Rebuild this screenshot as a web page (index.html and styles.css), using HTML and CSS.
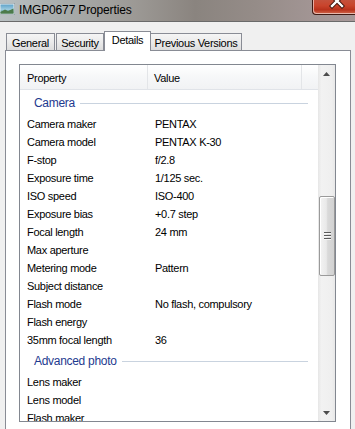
FILE: index.html
```html
<!DOCTYPE html>
<html>
<head>
<meta charset="utf-8">
<link rel="stylesheet" href="styles.css">
</head>
<body>
<div class="window">
  <div class="titlebar">
    <svg class="app-icon" width="16" height="12" viewBox="0 0 16 12">
      <defs>
        <linearGradient id="sky" x1="0" y1="0" x2="0" y2="1">
          <stop offset="0" stop-color="#5fa3c9"/>
          <stop offset="0.55" stop-color="#9ccbe0"/>
          <stop offset="1" stop-color="#3f7f5a"/>
        </linearGradient>
      </defs>
      <rect x="0" y="0" width="16" height="12" fill="#e8eef0" stroke="#7b8890" stroke-width="1"/>
      <rect x="1.5" y="1.5" width="13" height="9" fill="url(#sky)"/>
      <path d="M1.5 9 L6 6.5 L9 8 L14.5 5.5 L14.5 10.5 L1.5 10.5 Z" fill="#4c7a4a"/>
    </svg>
    <span class="title">IMGP0677 Properties</span>
    <div class="close-btn">
      <svg width="16" height="10" viewBox="0 0 16 10">
        <path d="M3 -4 L13 6 M13 -4 L3 6" stroke="#3a1008" stroke-width="4.2" stroke-linecap="square"/>
        <path d="M3 -4 L13 6 M13 -4 L3 6" stroke="#ffffff" stroke-width="2.4" stroke-linecap="square"/>
      </svg>
    </div>
  </div>

  <div class="tabs">
    <div class="tab tab-general">General</div>
    <div class="tab tab-security">Security</div>
    <div class="tab tab-details active">Details</div>
    <div class="tab tab-previous">Previous Versions</div>
  </div>

  <div class="panel">
    <div class="list">
      <div class="list-main">
        <div class="header">
          <div class="hcell hcell-prop">Property</div>
          <div class="hcell hcell-value">Value</div>
          <div class="hcell hcell-extra"></div>
        </div>
        <div class="group group-first"><span>Camera</span><i class="rule"></i></div>
        <div class="row"><span class="p">Camera maker</span><span class="v">PENTAX</span></div>
        <div class="row"><span class="p">Camera model</span><span class="v">PENTAX K-30</span></div>
        <div class="row"><span class="p">F-stop</span><span class="v">f/2.8</span></div>
        <div class="row"><span class="p">Exposure time</span><span class="v">1/125 sec.</span></div>
        <div class="row"><span class="p">ISO speed</span><span class="v">ISO-400</span></div>
        <div class="row"><span class="p">Exposure bias</span><span class="v">+0.7 step</span></div>
        <div class="row"><span class="p">Focal length</span><span class="v">24 mm</span></div>
        <div class="row"><span class="p">Max aperture</span><span class="v"></span></div>
        <div class="row"><span class="p">Metering mode</span><span class="v">Pattern</span></div>
        <div class="row"><span class="p">Subject distance</span><span class="v"></span></div>
        <div class="row"><span class="p">Flash mode</span><span class="v">No flash, compulsory</span></div>
        <div class="row"><span class="p">Flash energy</span><span class="v"></span></div>
        <div class="row"><span class="p">35mm focal length</span><span class="v">36</span></div>
        <div class="group"><span>Advanced photo</span><i class="rule"></i></div>
        <div class="row"><span class="p">Lens maker</span><span class="v"></span></div>
        <div class="row"><span class="p">Lens model</span><span class="v"></span></div>
        <div class="row"><span class="p">Flash maker</span><span class="v"></span></div>
      </div>
      <div class="scrollbar">
        <div class="sb-btn">
          <svg width="7" height="4" viewBox="0 0 7 4"><path d="M0 4 L3.5 0 L7 4 Z" fill="#4d4d4d"/></svg>
        </div>
        <div class="sb-track">
          <div class="sb-thumb">
            <div class="grip"></div><div class="grip"></div><div class="grip"></div>
          </div>
        </div>
        <div class="sb-btn">
          <svg width="7" height="4" viewBox="0 0 7 4"><path d="M0 0 L7 0 L3.5 4 Z" fill="#4d4d4d"/></svg>
        </div>
      </div>
    </div>
  </div>
</div>
</body>
</html>
```

FILE: styles.css
```css
html, body {
  margin: 0;
  padding: 0;
}
body {
  width: 355px;
  height: 429px;
  overflow: hidden;
  background: #f0f0f0;
  font-family: "Liberation Sans", Arial, sans-serif;
  font-size: 11px;
  letter-spacing: -0.3px;
  color: #000;
}
.window {
  width: 355px;
  height: 429px;
  overflow: hidden;
}
.titlebar {
  height: 21px;
  border-bottom: 1px solid #6a6a6a;
  display: flex;
  align-items: flex-start;
  background: linear-gradient(90deg, #b9c0c2 0%, #a8acab 18%, #9c9995 38%, #8a847f 55%, #958c88 72%, #a29594 88%, #a7999a 100%);
}
.app-icon {
  margin-top: 3px;
  margin-left: -1px;
  flex: none;
}
.title {
  margin-left: 4px;
  margin-top: 3px;
  font-size: 12px;
  letter-spacing: -0.15px;
  line-height: 14px;
  color: #000;
}
.close-btn {
  margin-left: auto;
  width: 42px;
  height: 14px;
  border: 1px solid #3f1a14;
  border-top: none;
  border-right: none;
  border-bottom-left-radius: 4px;
  background: linear-gradient(180deg, #c4513c 0%, #c9442c 40%, #b8321c 70%, #d06a4e 100%);
  box-shadow: inset 1px -1px 0 rgba(255,255,255,0.55);
  display: flex;
  justify-content: center;
  align-items: flex-start;
  flex: none;
}
.close-btn svg {
  margin-top: 0;
  margin-left: 6px;
}

.tabs {
  display: flex;
  align-items: flex-end;
  margin-top: 9px;
  padding-left: 6px;
  height: 19px;
  position: relative;
  z-index: 1;
}
.tab {
  height: 16px;
  border: 1px solid #898c95;
  border-bottom: none;
  background: linear-gradient(180deg, #f5f5f5 0%, #ebebeb 50%, #dddddd 100%);
  text-align: center;
  line-height: 18px;
  box-sizing: content-box;
  white-space: nowrap;
}
.tab-general { width: 47px; margin-right: 1px; }
.tab-security { width: 46px; }
.tab-details { width: 45px; margin-left: 0; }
.tab-previous { width: 90px; border-left: none; margin-left: 0; }
.tab.active {
  height: 19px;
  background: #ffffff;
  line-height: 16px;
  margin-bottom: -1px;
  border-color: #898c95;
}

.panel {
  margin: 0 4px 0 5px;
  border: 1px solid #898c95;
  background: #ffffff;
  padding: 13px 14px 0 13px;
  height: 400px;
}
.list {
  border: 1px solid #828790;
  height: 356px;
  display: flex;
  overflow: hidden;
}
.list-main {
  flex: 1;
  min-width: 0;
  overflow: hidden;
}
.header {
  display: flex;
  height: 24px;
  border-bottom: 1px solid #e0e3e8;
  background: linear-gradient(180deg, #ffffff 0%, #f7f8f9 45%, #f1f2f4 100%);
}
.hcell {
  line-height: 26px;
  box-sizing: border-box;
}
.hcell-prop {
  width: 128px;
  padding-left: 7px;
  border-right: 1px solid #e3e5e8;
}
.hcell-value {
  width: 154px;
  padding-left: 6px;
  border-right: 1px solid #e3e5e8;
}
.hcell-extra {
  flex: 1;
}
.group {
  display: flex;
  align-items: center;
  height: 24px;
  padding-left: 14px;
  padding-right: 10px;
  font-size: 12px;
  color: #1e3a8f;
}
.group-first {
  margin-top: 1px;
}
.group span {
  flex: none;
}
.rule {
  flex: 1;
  height: 1px;
  background: #c9d3df;
  margin-left: 5px;
  margin-top: 1px;
}
.row {
  display: flex;
  height: 18px;
  line-height: 18px;
  white-space: nowrap;
}
.row .p {
  width: 128px;
  padding-left: 7px;
  flex: none;
}
.row .v {
  flex: 1;
}

.scrollbar {
  width: 17px;
  flex: none;
  display: flex;
  flex-direction: column;
  background: linear-gradient(90deg, #e6e6e6 0%, #f2f2f2 20%, #efefef 80%, #e8e8e8 100%);
}
.sb-btn {
  height: 17px;
  display: flex;
  align-items: center;
  justify-content: center;
  flex: none;
}
.sb-track {
  flex: 1;
  padding-top: 114px;
  box-sizing: border-box;
}
.sb-thumb {
  height: 78px;
  margin: 0 0 0 1px;
  border: 1px solid #9a9a9a;
  border-radius: 2px;
  background: linear-gradient(90deg, #f3f3f3 0%, #e9e9e9 45%, #d9d9d9 55%, #d2d2d2 100%);
  box-shadow: inset 1px 1px 0 #ffffff;
  display: flex;
  flex-direction: column;
  justify-content: center;
  align-items: center;
  gap: 1px;
}
.grip {
  width: 7px;
  height: 1px;
  background: #5a5a5a;
  border-bottom: 1px solid #f6f6f6;
}
```
